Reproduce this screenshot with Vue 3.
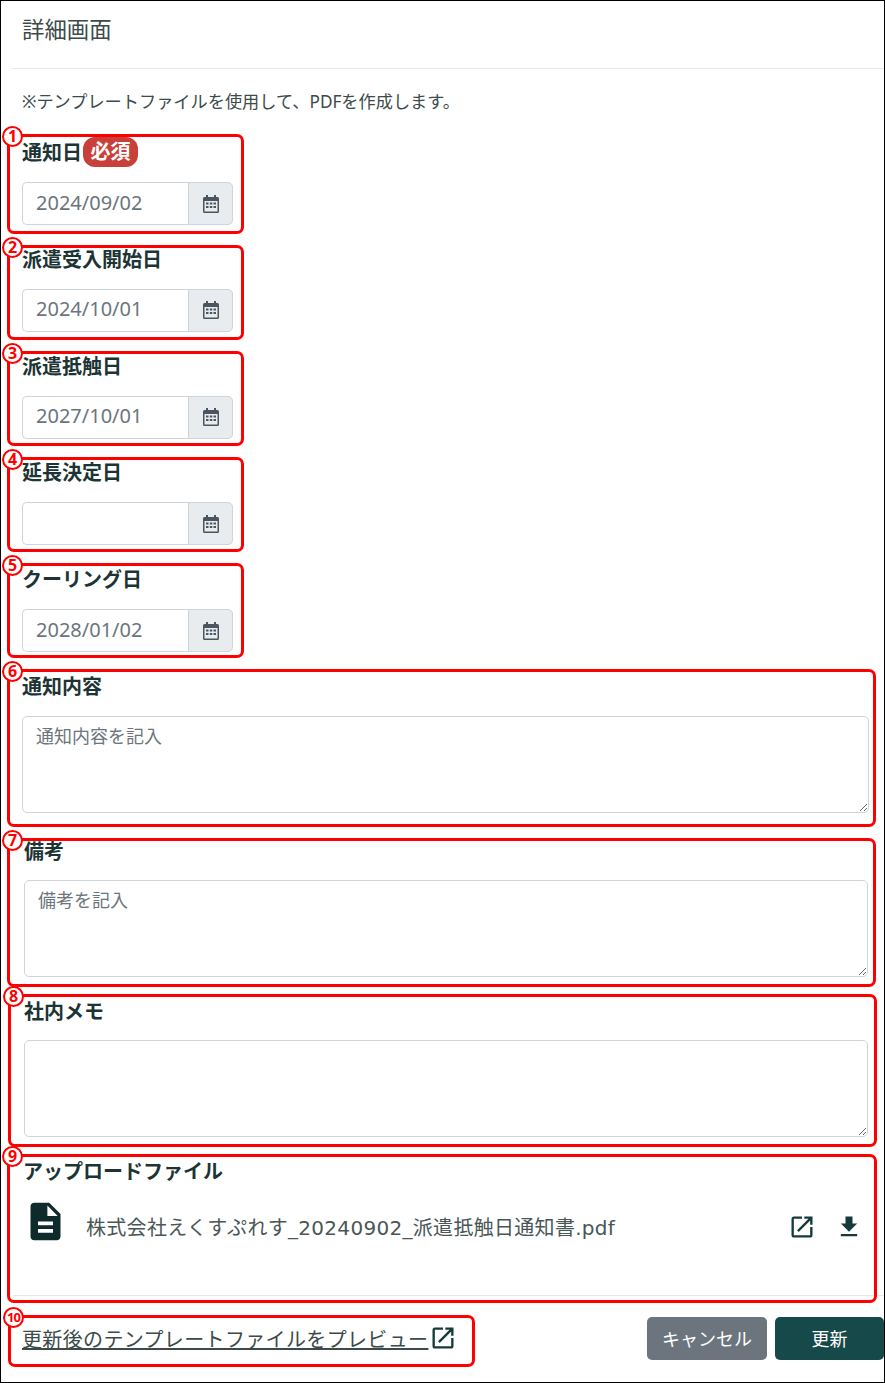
<template>
  <div class="window">
    <header class="head"><h1>詳細画面</h1></header>
    <main class="body">
      <p class="hint">※テンプレートファイルを使用して、PDFを作成します。</p>

      <div v-for="d in dates" :key="d.label" class="field date-field">
        <label class="label">
          {{ d.label }}<span v-if="d.required" class="badge">必須</span>
        </label>
        <div class="date-group">
          <input class="date-input" type="text" :value="d.value" />
          <span class="date-btn">
            <svg viewBox="0 0 16 18" width="16" height="18">
              <path fill="#4a5560" d="M3 0h2v2h6V0h2v2h1.500A1.500 1.500 0 0 1 16 3.500v13a1.500 1.500 0 0 1-1.500 1.500h-13A1.500 1.500 0 0 1 0 16.500v-13A1.500 1.500 0 0 1 1.500 2H3zM1.500 6v10.500h13V6z"/>
              <path fill="#4a5560" d="M3 7.500h2.500v2H3zM6.800 7.500h2.500v2H6.800zM10.500 7.500H13v2h-2.500zM3 11h2.500v2H3zM6.800 11h2.500v2H6.800zM10.500 11H13v2h-2.500z"/>
            </svg>
          </span>
        </div>
      </div>

      <div v-for="t in texts" :key="t.label" class="field text-field" :class="t.cls">
        <label class="label">{{ t.label }}</label>
        <textarea class="memo" :placeholder="t.placeholder"></textarea>
      </div>

      <section class="upload">
        <div class="label">アップロードファイル</div>
        <div class="file-row">
          <svg class="file-icon" viewBox="0 0 24 24" width="45" height="45">
            <path d="M14 2H6c-1.100 0-1.990.9-1.990 2L4 20c0 1.100.89 2 1.990 2H18c1.100 0 2-.9 2-2V8l-6-6zm2 16H8v-2h8v2zm0-4H8v-2h8v2zm-3-5V3.500L18.500 9H13z"/>
          </svg>
          <span class="file-name">株式会社えくすぷれす_20240902_派遣抵触日通知書.pdf</span>
          <svg class="act" viewBox="0 0 24 24" width="28" height="28">
            <path :d="openIcon"/>
          </svg>
          <svg class="act" viewBox="0 0 24 24" width="28" height="28">
            <path d="M19 9h-4V3H9v6H5l7 7 7-7zM5 18v2h14v-2H5z"/>
          </svg>
        </div>
      </section>

      <footer class="foot">
        <a class="preview">
          <span class="preview-text">更新後のテンプレートファイルをプレビュー</span>
          <svg class="act" viewBox="0 0 24 24" width="28" height="28">
            <path :d="openIcon"/>
          </svg>
        </a>
        <div class="buttons">
          <button class="btn cancel">キャンセル</button>
          <button class="btn update">更新</button>
        </div>
      </footer>
    </main>

    <!-- red callouts drawn on top of the form -->
    <div v-for="m in marks" :key="m.n" class="mark"
      :style="{ left: m.x + 'px', top: m.y + 'px', width: m.w + 'px', height: m.h + 'px' }">
      <span class="num" :class="{ wide: m.n > 9 }">{{ m.n }}</span>
    </div>
  </div>
</template>

<script setup>
const openIcon = 'M19 19H5V5h7V3H5c-1.110 0-2 .9-2 2v14c0 1.100.89 2 2 2h14c1.100 0 2-.9 2-2v-7h-2v7zM14 3v2h3.590l-9.830 9.830 1.410 1.410L19 6.410V10h2V3h-7z'

const dates = [
  { label: '通知日', value: '2024/09/02', required: true },
  { label: '派遣受入開始日', value: '2024/10/01' },
  { label: '派遣抵触日', value: '2027/10/01' },
  { label: '延長決定日', value: '' },
  { label: 'クーリング日', value: '2028/01/02' }
]

const texts = [
  { label: '通知内容', placeholder: '通知内容を記入', cls: 'first' },
  { label: '備考', placeholder: '備考を記入', cls: 'inner' },
  { label: '社内メモ', placeholder: '', cls: 'inner' }
]

const marks = [
  { n: 1, x: 7, y: 134, w: 237, h: 100 },
  { n: 2, x: 7, y: 245, w: 237, h: 95 },
  { n: 3, x: 7, y: 351, w: 237, h: 95 },
  { n: 4, x: 7, y: 457, w: 237, h: 95 },
  { n: 5, x: 7, y: 563, w: 237, h: 95 },
  { n: 6, x: 7, y: 669, w: 869, h: 158 },
  { n: 7, x: 7, y: 838, w: 869, h: 149 },
  { n: 8, x: 8, y: 994, w: 869, h: 153 },
  { n: 9, x: 7, y: 1154, w: 870, h: 149 },
  { n: 10, x: 8, y: 1315, w: 467, h: 52 }
]
</script>

<style>
html, body { margin: 0; background: #fff; overflow: hidden; }
</style>

<style scoped>
.window {
  position: relative;
  box-sizing: border-box;
  width: 885px;
  height: 1383px;
  border: 1px solid #000;
  overflow: hidden;
  background: #fff;
  color: #1c3a3a;
  font-family: "Noto Sans", "Noto Sans CJK JP", sans-serif;
}
.head { margin-left: 11px; height: 67px; border-bottom: 1px solid #e6e9ec; }
.head h1 { margin: 0; padding: 14px 0 0 10px; font-size: 22.400px; line-height: 30px; font-weight: 400; color: #3c4a4a; }
.body { padding: 0 0 0 21px; }
.hint { margin: 0 0 24px; padding-top: 21px; font-size: 17.200px; line-height: 24px; height: 24px; color: #3c4a4a; }
.label { display: flex; align-items: center; height: 27px; font-size: 20px; font-weight: 700; color: #1c3434; }
.badge {
  margin-left: 1px;
  padding: 0 7.500px;
  height: 30px;
  line-height: 29px;
  border-radius: 12px;
  background: #c9403a;
  color: #fff;
  font-size: 20px;
}
.date-field { width: 211px; height: 92px; margin-bottom: 14.750px; }
.date-group { display: flex; height: 43px; margin-top: 17px; }
.date-input {
  box-sizing: border-box;
  width: 166px;
  height: 100%;
  padding: 0 13px 3px;
  border: 1px solid #ced4da;
  border-right: 0;
  border-radius: 5px 0 0 5px;
  font: inherit;
  font-size: 20px;
  color: #6c757d;
  background: #fff;
  outline: none;
}
.date-btn {
  flex: 1;
  display: flex;
  align-items: center;
  justify-content: center;
  background: #e9ecef;
  border: 1px solid #ced4da;
  border-radius: 0 5px 5px 0;
}
.text-field { height: 160px; }
.text-field.inner { padding-left: 2px; }
.text-field.first { height: 165px; }
.memo {
  display: block;
  box-sizing: border-box;
  width: 844px;
  height: 97px;
  margin-top: 16px;
  padding: 7px 13px;
  border: 1px solid #ced4da;
  border-radius: 5px;
  font: inherit;
  font-size: 18px;
  line-height: 24px;
  color: #495057;
  resize: vertical;
  outline: none;
}
.text-field.first .memo { width: 847px; margin-top: 17px; }
.memo::placeholder { color: #6c757d; opacity: 1; }
.upload {
  box-sizing: content-box;
  height: 138px;
  margin-left: -9px;
  padding-left: 10px;
  border-bottom: 1px solid #e6e9ec;
}
.file-row { display: flex; align-items: center; margin-top: 15px; }
.file-icon { fill: #0f2a2a; flex: none; }
.file-name {
  margin: 10px 0 0 18px;
  flex: 1;
  font-family: "DejaVu Sans", "Noto Sans CJK JP", sans-serif;
  font-size: 20px;
  letter-spacing: .3px;
  color: #4a5656;
}
.act { fill: #153a3a; flex: none; display: block; }
.file-row .act { margin: 12px 19px 0 0; }
.file-row .act:last-child { margin-right: 21px; }
.foot { display: flex; align-items: center; justify-content: space-between; padding-top: 21px; }
.preview { display: flex; align-items: center; color: #3c4a4a; font-size: 20px; letter-spacing: .35px; }
.preview-text { text-decoration: underline; }
.preview .act { margin-left: 1px; }
.buttons { display: flex; gap: 8px; }
.btn {
  height: 43px;
  border: 0;
  border-radius: 5px;
  color: #fff;
  font: inherit;
  font-size: 18px;
}
.cancel { width: 120px; background: #6c757d; }
.update { width: 109px; background: #16494a; }
.mark {
  position: absolute;
  box-sizing: border-box;
  margin: -1px 0 0 -1px;
  border: 3px solid #f00;
  border-radius: 7px;
  pointer-events: none;
}
.num {
  position: absolute;
  left: -8px;
  top: -11px;
  box-sizing: border-box;
  width: 21px;
  height: 21px;
  border: 2px solid #f00;
  border-radius: 50%;
  background: #fff;
  color: #f00;
  font-size: 16px;
  line-height: 17px;
  font-weight: 700;
  text-align: center;
}
.num.wide { font-size: 13px; letter-spacing: -1px; }
</style>
